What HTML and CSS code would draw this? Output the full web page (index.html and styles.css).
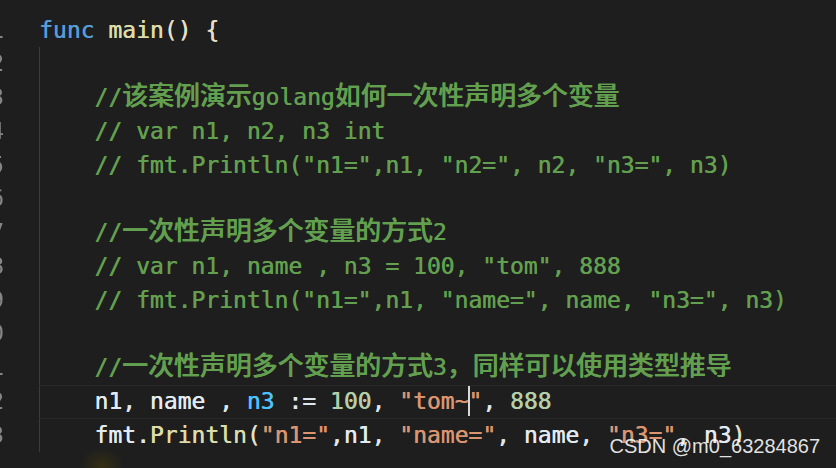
FILE: index.html
```html
<!DOCTYPE html>
<html lang="zh-CN">
<head>
<meta charset="utf-8">
<title>main.go</title>
<link rel="stylesheet" href="styles.css">
</head>
<body>
<div class="editor">
  <div class="gutter">
    <div class="ln">11</div><div class="ln">12</div><div class="ln">13</div><div class="ln">14</div><div class="ln">15</div><div class="ln">16</div><div class="ln">17</div><div class="ln">18</div><div class="ln">19</div><div class="ln">20</div><div class="ln">21</div><div class="ln">22</div><div class="ln">23</div>
  </div>
  <div class="code">
    <div class="line"><span class="kw">func</span> <span class="fn">main</span><span class="br">()</span> <span class="br">{</span></div>
    <div class="block">
      <div class="line"> </div>
      <div class="line cm">//<span class="cjk">该案例演示</span>golang<span class="cjk">如何一次性声明多个变量</span></div>
      <div class="line cm">// var n1, n2, n3 int</div>
      <div class="line cm">// fmt.Println("n1=",n1, "n2=", n2, "n3=", n3)</div>
      <div class="line"> </div>
      <div class="line cm">//<span class="cjk">一次性声明多个变量的方式</span>2</div>
      <div class="line cm">// var n1, name , n3 = 100, "tom", 888</div>
      <div class="line cm">// fmt.Println("n1=",n1, "name=", name, "n3=", n3)</div>
      <div class="line"> </div>
      <div class="line cm">//<span class="cjk">一次性声明多个变量的方式</span>3<span class="cjk">，同样可以使用类型推导</span></div>
      <div class="line current"><span class="var">n1</span>, <span class="var">name</span> , <span class="var2">n3</span> := <span class="num">100</span>, <span class="str">"tom~<span class="caret"></span>"</span>, <span class="num">888</span></div>
      <div class="line"><span class="var">fmt</span>.<span class="fn">Println</span><span class="br">(</span><span class="str">"n1="</span>,<span class="var">n1</span>, <span class="str">"name="</span>, <span class="var">name</span>, <span class="str">"n3="</span>, <span class="var">n3</span><span class="br">)</span></div>
    </div>
  </div>
</div>
<div class="glow"></div>
<div class="watermark">CSDN @m0_63284867</div>
</body>
</html>
```

FILE: styles.css
```css
html, body {
  margin: 0;
  padding: 0;
  width: 836px;
  height: 468px;
  overflow: hidden;
  background: #1e1e1e;
}

body {
  position: relative;
}

.editor {
  display: flex;
  padding-top: 13.5px;
  font-family: "DejaVu Sans Mono", "Noto Sans CJK SC", monospace;
  font-size: 23px;
  line-height: 33.75px;
  color: #dfe6ec;
  text-shadow: 0.45px 0 0 currentColor;
}

.gutter {
  width: 4px;
  overflow: hidden;
  direction: rtl;
  color: #858585;
  flex-shrink: 0;
  text-shadow: none;
  filter: grayscale(1);
}

.ln {
  height: 33.75px;
  white-space: nowrap;
}

.code {
  padding-left: 35px;
  flex: 1;
}

.line {
  height: 33.75px;
  white-space: pre;
}

.block {
  border-left: 1px solid #3c3c3c;
  padding-left: 54.4px;
}

.cjk {
  font-family: "Noto Sans CJK SC", sans-serif;
  font-size: 25.9px;
  font-weight: 500;
  line-height: 1;
}

.kw { color: #569cd6; }
.fn { color: #dcdcaa; }
.br { color: #e4dfc6; }
.cm { color: #62a04f; }
.var { color: #e2ebf2; }
.var2 { color: #4fc1ff; }
.num { color: #b5cea8; }
.str { color: #db9470; }

.current {
  box-shadow: inset 0 1px 0 #292929, inset 0 -1px 0 #292929;
  margin-left: -55.4px;
  padding-left: 55.4px;
}

.caret {
  display: inline-block;
  width: 2px;
  height: 30px;
  margin-right: -2px;
  vertical-align: -7px;
  background: #d8d8d8;
}

.glow {
  position: absolute;
  left: 80px;
  top: 448px;
  width: 44px;
  height: 36px;
  border-radius: 50%;
  background: radial-gradient(closest-side, rgba(70, 60, 10, 0.55), rgba(70, 60, 10, 0));
}

.watermark {
  position: absolute;
  right: 16px;
  bottom: 12px;
  font-family: "Liberation Sans", Arial, sans-serif;
  font-size: 20px;
  line-height: 1;
  color: rgba(255, 255, 255, 0.88);
}
```
